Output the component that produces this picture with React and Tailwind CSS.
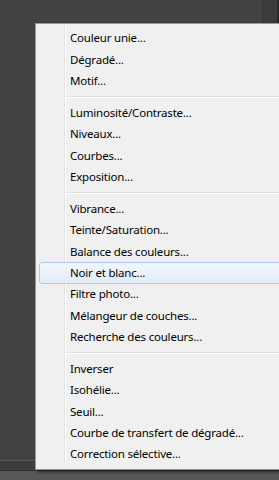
const groups = [
  ["Couleur unie...", "Dégradé...", "Motif..."],
  ["Luminosité/Contraste...", "Niveaux...", "Courbes...", "Exposition..."],
  [
    "Vibrance...",
    "Teinte/Saturation...",
    "Balance des couleurs...",
    "Noir et blanc...",
    "Filtre photo...",
    "Mélangeur de couches...",
    "Recherche des couleurs...",
  ],
  ["Inverser", "Isohélie...", "Seuil...", "Courbe de transfert de dégradé...", "Correction sélective..."],
];

function Item({ label }) {
  const active = label === "Noir et blanc...";
  return (
    <div className="relative h-[21.33px] flex items-center">
      {active && (
        <div className="absolute left-[3px] -right-[3px] top-[0px] bottom-[-0.5px] rounded-[3px] border border-[#a8cbf1] bg-gradient-to-b from-[#f3f7fc] to-[#e3ecf8]" />
      )}
      <span className="relative pl-[34px] whitespace-nowrap">{label}</span>
    </div>
  );
}

export default function App() {
  return (
    <div
      className="relative w-[279px] h-[480px] overflow-hidden bg-[#434343] flex flex-col"
      style={{ fontFamily: '"Noto Sans", "Open Sans", sans-serif' }}
    >
      <div className="flex-1 flex">
        <div className="flex-1" />
        <div className="w-[17px] bg-[#3b3b3b] border-l border-[#363636] border-r-2 border-r-[#2a2a2a]" />
      </div>
      <div className="h-[1px] bg-[#5a5a5a]" />
      <div className="h-[9px] bg-[#3d3d3d]" />
      <div className="h-[10px] bg-[#575757] border-t border-[#2e2e2e]" />

      {/* context menu */}
      <div className="absolute left-[35px] top-[23px] w-[250px] h-[447px] bg-[#f0f0f0] border border-[#979797] shadow-[2px_2px_3px_rgba(0,0,0,0.5)] pt-[3.5px] text-[11.5px] tracking-[-0.2px] leading-none text-black">
        <div className="absolute left-[28px] top-[2px] bottom-[2px] w-[2px] border-l border-[#e2e3e3] border-r border-r-white" />
        {groups.map((g, gi) => (
          <div key={gi}>
            {gi > 0 && (
              <div className="h-[10.67px] flex items-center pl-[30px]">
                <div className="w-full h-[2px] border-t border-[#e0e0e0] border-b border-b-white" />
              </div>
            )}
            {g.map((l) => (
              <Item key={l} label={l} />
            ))}
          </div>
        ))}
      </div>
    </div>
  );
}
